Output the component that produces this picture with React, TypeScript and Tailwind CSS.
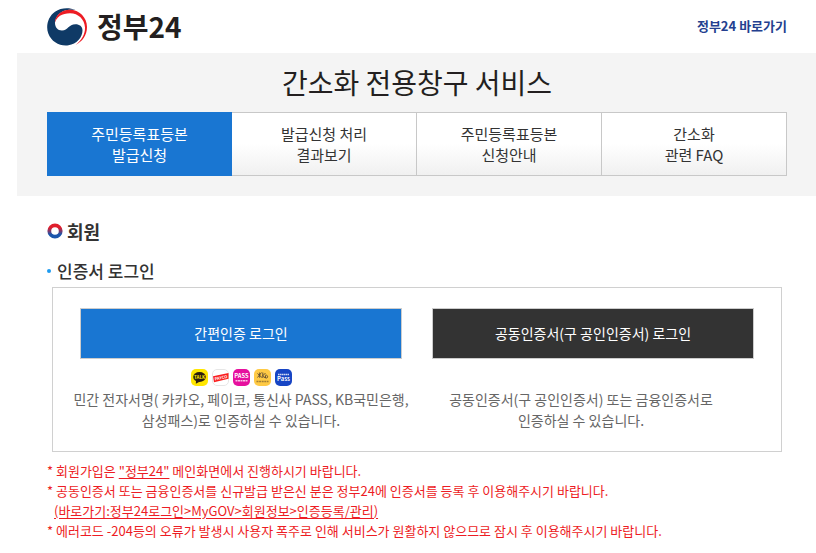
import clsx from "clsx";

const TABS = [
  { lines: ["주민등록표등본", "발급신청"], active: true },
  { lines: ["발급신청 처리", "결과보기"], active: false },
  { lines: ["주민등록표등본", "신청안내"], active: false },
  { lines: ["간소화", "관련 FAQ"], active: false },
];

function GovLogo() {
  return (
    <svg width="40" height="38" viewBox="0 0 40 38" aria-hidden="true">
      <path
        d="M28.500 2C22-.6 14-.4 8 3.800C1 8.800-1.500 18 1.300 25.500C4.500 34 13 38.500 21.500 37.300C29.500 36 35.500 29.500 35.500 22.500C35.500 18.500 32.500 16.300 28.500 16.300C21.500 16.300 21 22.500 15 22.500C10.500 22.500 8 19 8 15C8 8.500 14 2.300 22 1.800C24.500 1.600 26.500 1.700 28.500 2Z"
        fill="#0f3a66"
      />
      <path
        d="M7.800 15C8 7.500 14.500 1.700 22.500 1.700C32.500 1.700 40 9.500 40 19C40 27 35.500 33.500 28.500 37C34.500 32.500 38.300 26 38 19.500C37.500 11.500 31.500 5.300 23 5.300C15 5.300 9.500 9 7.800 15Z"
        fill="#ed1c24"
      />
    </svg>
  );
}

function RingIcon() {
  return (
    <svg width="16" height="16" viewBox="0 0 16 16" aria-hidden="true">
      <defs>
        <linearGradient id="ring" x1="0" y1="0" x2="0" y2="1">
          <stop offset="0.2" stopColor="#e01f2d" />
          <stop offset="0.8" stopColor="#1b55ab" />
        </linearGradient>
      </defs>
      <circle cx="8" cy="8" r="5.700" fill="none" stroke="url(#ring)" strokeWidth="3.800" />
    </svg>
  );
}

function ProviderIcons() {
  return (
    <div className="flex h-[17px] justify-center gap-1">
      <svg width="17" height="17" viewBox="0 0 17 17" role="img" aria-label="카카오">
        <rect width="17" height="17" rx="5" fill="#ffe600" />
        <ellipse cx="8.500" cy="8" rx="6.300" ry="5" fill="#2b1d10" />
        <path d="M5 11.500L4.800 14.800L9 12.500Z" fill="#2b1d10" />
        <text x="8.500" y="9.700" fontSize="4.500" fontWeight="700" textAnchor="middle" fill="#ffe600">TALK</text>
      </svg>
      <svg width="17" height="17" viewBox="0 0 17 17" role="img" aria-label="페이코">
        <rect x="0.500" y="0.500" width="16" height="16" rx="4.500" fill="#fff" stroke="#e6e6e6" />
        <path d="M1 7.200L16.500 4V9.800L2 13.200Z" fill="#fa1e1e" />
        <text x="9" y="10.200" fontSize="4" fontWeight="700" textAnchor="middle" fill="#fff" transform="rotate(-11 9 9)">PAYCO</text>
      </svg>
      <svg width="17" height="17" viewBox="0 0 17 17" role="img" aria-label="PASS">
        <rect width="17" height="17" rx="5" fill="#e6109e" />
        <text x="8.500" y="9" fontSize="5.800" fontWeight="700" textAnchor="middle" fill="#fff">PASS</text>
        <path d="M2.500 11.700H14.500" stroke="#fff" strokeWidth="1.500" strokeDasharray="2 .5" opacity=".75" />
      </svg>
      <svg width="17" height="17" viewBox="0 0 17 17" role="img" aria-label="KB국민은행">
        <rect width="17" height="17" rx="5" fill="#ffca45" />
        <path
          d="M3.500 4.500L8 8.500M7.500 3.500L3.500 8.500M5.700 3.500V8.800M8.800 3.500V9M9 6.500L11.500 4M9 6.500L11 9M11.300 6.200H12.500C14 6.500 14 9 12.500 9H11.500V6.500"
          fill="none"
          stroke="#5b4a33"
          strokeWidth="0.900"
        />
        <path d="M2.500 12.500H14.500" stroke="#7b6030" strokeWidth="1.500" strokeDasharray="2 .6" opacity=".7" />
      </svg>
      <svg width="17" height="17" viewBox="0 0 17 17" role="img" aria-label="삼성패스">
        <rect width="17" height="17" rx="5" fill="#1745c4" />
        <path d="M3 5.500H14" stroke="#fff" strokeWidth="1.300" strokeDasharray="1.500 .4" opacity=".8" />
        <text x="8.500" y="12.300" fontSize="5.800" fontWeight="700" textAnchor="middle" fill="#fff">Pass</text>
      </svg>
    </div>
  );
}

export default function App() {
  return (
    <div className="bg-white pl-[17px] font-['Noto_Sans_CJK_KR','Noto_Sans',sans-serif] text-[#333]">
      <header className="flex h-[53px] items-center justify-between pr-[29px] pl-[30px]">
        <a href="#" className="flex items-center gap-[10px]">
          <GovLogo />
          <span className="pb-[2px] text-[28px] leading-9 font-bold text-[#231f20]">정부24</span>
        </a>
        <a href="#" className="pb-[2px] text-[13px] leading-5 font-bold text-[#243f8f]">
          정부24 바로가기
        </a>
      </header>

      <section className="bg-[#f4f4f4] pr-[29px] pb-5 pl-[30px]">
        <h1 className="h-[59px] text-center text-[28px] leading-[59px] font-normal text-[#231f20]">
          간소화 전용창구 서비스
        </h1>
        <nav className="grid h-16 grid-cols-4">
          {TABS.map((tab) => (
            <a
              key={tab.lines.join(" ")}
              href="#"
              aria-current={tab.active ? "page" : undefined}
              className={clsx(
                "border-y py-[10px] text-center text-[15px] leading-[21px]",
                tab.active
                  ? "border-[#1976d2] bg-[#1976d2] text-white"
                  : "border-r border-[#c8c8c8] bg-linear-to-b from-white from-50% to-[#f0f0f0]"
              )}
            >
              {tab.lines[0]}
              <br />
              {tab.lines[1]}
            </a>
          ))}
        </nav>
      </section>

      <main className="pt-5 pr-[29px] pl-[30px]">
        <h2 className="flex items-center gap-1 text-lg leading-[30px] font-bold">
          <RingIcon />
          회원
        </h2>
        <h3 className="mt-[13px] flex items-center gap-[6px] text-[17px] leading-6 font-medium">
          <span className="size-1 rounded-full bg-[#1e9bf0]" />
          인증서 로그인
        </h3>

        <div className="mx-[5px] mt-1 grid grid-cols-2 gap-[30px] border border-[#d0d0d0] px-[27px] pt-5 pb-5 text-sm leading-[21px] text-[#666]">
          <div>
            <button type="button" className="h-[51px] w-full border border-[#ccc] bg-[#1976d2] text-white">
              간편인증 로그인
            </button>
            <div className="pt-[10px]">
              <ProviderIcons />
            </div>
            <div className="mt-[3px] flex justify-center">
              <p className="text-center whitespace-nowrap">
                민간 전자서명( 카카오, 페이코, 통신사 PASS, KB국민은행,
                <br />
                삼성패스)로 인증하실 수 있습니다.
              </p>
            </div>
          </div>
          <div>
            <button type="button" className="h-[51px] w-full border border-[#ccc] bg-[#333] text-white">
              공동인증서(구 공인인증서) 로그인
            </button>
            <p className="mt-[30px] pr-6 text-center">
              공동인증서(구 공인인증서) 또는 금융인증서로
              <br />
              인증하실 수 있습니다.
            </p>
          </div>
        </div>

        <ul className="mt-[9px] text-[13px] leading-5 text-[#ed1c24]">
          <li>
            * 회원가입은{" "}
            <a href="#" className="underline underline-offset-2">
              "정부24"
            </a>{" "}
            메인화면에서 진행하시기 바랍니다.
          </li>
          <li>
            * 공동인증서 또는 금융인증서를 신규발급 받은신 분은 정부24에 인증서를 등록 후 이용해주시기 바랍니다.
            <br />
            <a href="#" className="ml-[7px] underline underline-offset-2">
              (바로가기:정부24로그인&gt;MyGOV&gt;회원정보&gt;인증등록/관리)
            </a>
          </li>
          <li>* 에러코드 -204등의 오류가 발생시 사용자 폭주로 인해 서비스가 원활하지 않으므로 잠시 후 이용해주시기 바랍니다.</li>
        </ul>
      </main>
    </div>
  );
}
